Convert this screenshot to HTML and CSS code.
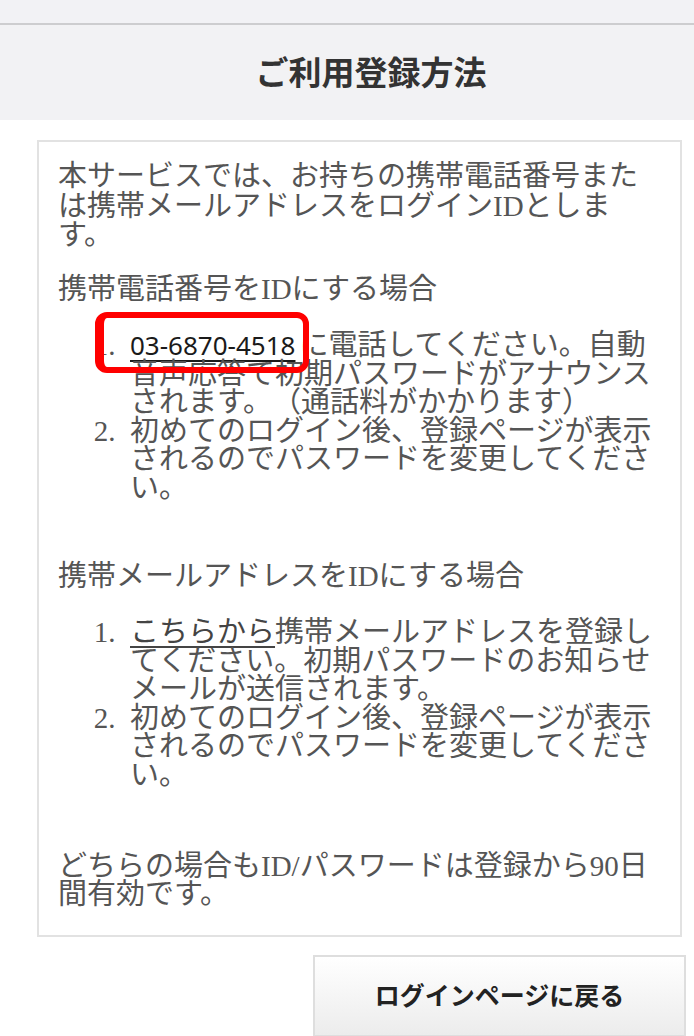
FILE: index.html
```html
<!DOCTYPE html>
<html lang="ja">
  <head>
    <meta charset="UTF-8" />
    <meta name="viewport" content="width=device-width, initial-scale=1.0" />
    <title>ご利用登録方法</title>
    <link rel="stylesheet" href="styles.css">
  </head>
  <body>
    <div class="topbar"></div>

    <header class="page-header">
      <h1>ご利用登録方法</h1>
    </header>

    <main class="content">
      <div class="guide">
        <p class="intro">本サービスでは、お持ちの携帯電話番号または携帯メールアドレスをログインIDとします。</p>

        <p class="case-title">携帯電話番号をIDにする場合</p>
        <ol class="steps">
          <li class="step-phone">
            <a class="tel" href="#">03-6870-4518</a>に電話してください。自動音声応答で初期パスワードがアナウンスされます。（通話料がかかります）
            <span class="highlight"></span>
          </li>
          <li>初めてのログイン後、登録ページが表示されるのでパスワードを変更してください。</li>
        </ol>

        <p class="case-title">携帯メールアドレスをIDにする場合</p>
        <ol class="steps steps-last">
          <li><a class="here" href="#">こちらから</a>携帯メールアドレスを登録してください。初期パスワードのお知らせメールが送信されます。</li>
          <li>初めてのログイン後、登録ページが表示されるのでパスワードを変更してください。</li>
        </ol>

        <p class="note">どちらの場合もID/パスワードは登録から90日間有効です。</p>
      </div>

      <div class="actions">
        <a class="back-btn" href="#">ログインページに戻る</a>
      </div>
    </main>
  </body>
</html>
```

FILE: styles.css
```css
body {
  margin: 0;
  background: #fff;
  font-family: "Liberation Serif", "Noto Sans CJK JP", serif;
  color: #555;
  text-spacing-trim: space-all;
}

.topbar {
  height: 23px;
  background: #f2f2f5;
  border-bottom: 2px solid #cdcdcf;
}

.page-header {
  height: 95px;
  background: #f2f2f4;
  display: flex;
  align-items: center;
  justify-content: center;
  padding-left: 48px;
}

.page-header h1 {
  margin: 0;
  font-size: 33px;
  font-weight: bold;
  color: #333;
  position: relative;
  top: -2px;
}

.content {
  padding: 20px 12px 0 37px;
}

.guide {
  border: 2px solid #e2e2e2;
  padding: 20px 19px 27px 19px;
  font-size: 29px;
  line-height: 29.5px;
}

.guide p {
  margin: 0;
}

.intro {
  margin-bottom: 24px !important;
}

.case-title {
  margin-bottom: 27px !important;
}

.steps {
  margin: 0 0 59px;
  padding-left: 72px;
  line-height: 28.6px;
}

.steps li::marker {
  content: counter(list-item) ".\2002";
}

.steps-last {
  margin-bottom: 62px;
}

.note {
  line-height: 28px;
}

.step-phone {
  position: relative;
}

.tel {
  font-family: "Noto Sans", "Open Sans", sans-serif;
  font-size: 26px;
  color: #1a1a1a;
  text-decoration: underline;
  text-underline-offset: 5px;
  margin-right: 4px;
}

.here {
  color: #444;
  text-decoration: underline;
  text-underline-offset: 4px;
}

/* red marker drawn over the phone number */
.highlight {
  position: absolute;
  top: -19px;
  left: -35px;
  width: 199px;
  height: 49px;
  border: 6px solid #ff0000;
  border-left-width: 9px;
  border-radius: 12px;
  pointer-events: none;
}

.actions {
  display: flex;
  justify-content: flex-end;
  margin-top: 18px;
  margin-right: -4px;
}

.back-btn {
  display: flex;
  align-items: center;
  justify-content: center;
  width: 373px;
  height: 82px;
  padding-bottom: 4px;
  box-sizing: border-box;
  border: 2px solid #dedede;
  background: linear-gradient(#ffffff, #ececec);
  font-size: 25px;
  font-weight: bold;
  color: #222;
  text-decoration: none;
}
```
